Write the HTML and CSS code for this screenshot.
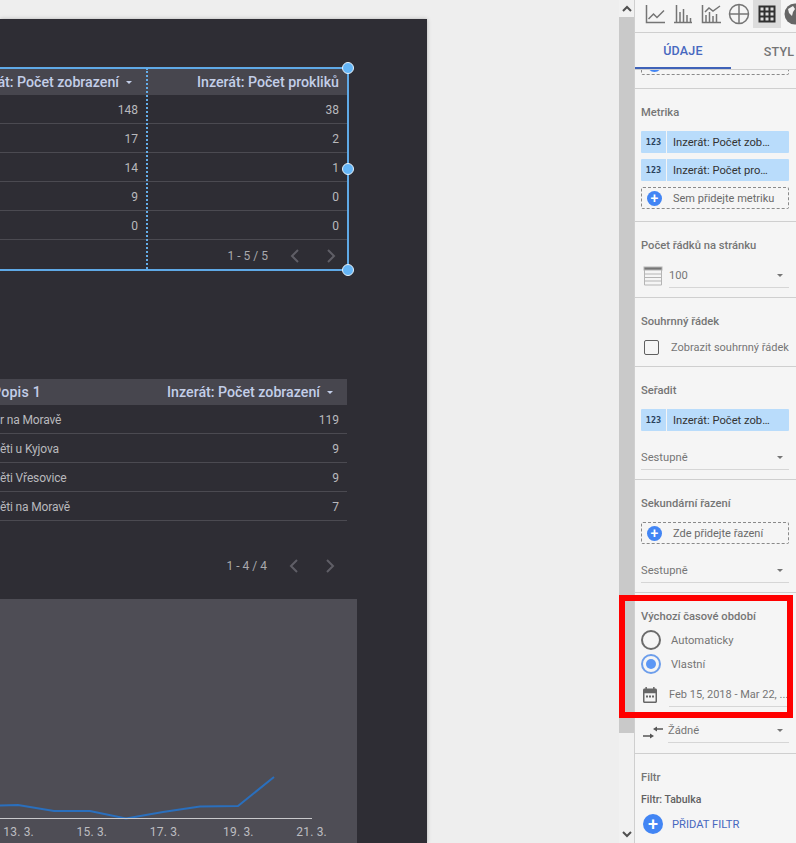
FILE: index.html
```html
<!DOCTYPE html>
<html lang="cs">
<head>
    <meta charset="UTF-8">
    <title>Report editor</title>
    <link rel="stylesheet" href="styles.css">
</head>
<body>
    <div class="workspace">
        <div class="report">
            <!-- first table, selected -->
            <div class="tbl tbl-one">
                <div class="tbl-head">
                    <div class="cell"><span class="nowrap">Inzerát: Počet zobrazení</span><span class="sort"></span></div>
                    <div class="cell"><span class="nowrap">Inzerát: Počet prokliků</span></div>
                </div>
                <div class="tbl-row"><div class="cell">148</div><div class="cell">38</div></div>
                <div class="tbl-row"><div class="cell">17</div><div class="cell">2</div></div>
                <div class="tbl-row"><div class="cell">14</div><div class="cell">1</div></div>
                <div class="tbl-row"><div class="cell">9</div><div class="cell">0</div></div>
                <div class="tbl-row"><div class="cell">0</div><div class="cell">0</div></div>
                <div class="pager">
                    <span>1 - 5 / 5</span>
                    <svg width="12" height="14" viewBox="0 0 12 14"><path d="M9 1 3 7l6 6" /></svg>
                    <svg width="12" height="14" viewBox="0 0 12 14"><path d="M3 1l6 6-6 6" /></svg>
                </div>
                <div class="selection"></div>
                <div class="col-guide"></div>
                <span class="handle handle-top"></span>
                <span class="handle handle-mid"></span>
                <span class="handle handle-bottom"></span>
            </div>

            <!-- second table -->
            <div class="tbl tbl-two">
                <div class="tbl-head">
                    <div class="cell cell-text"><span class="nowrap popis">Popis 1</span></div>
                    <div class="cell"><span class="nowrap">Inzerát: Počet zobrazení</span><span class="sort"></span></div>
                </div>
                <div class="tbl-row"><div class="cell cell-text">r na Moravě</div><div class="cell">119</div></div>
                <div class="tbl-row"><div class="cell cell-text">ěti u Kyjova</div><div class="cell">9</div></div>
                <div class="tbl-row"><div class="cell cell-text">ěti Vřesovice</div><div class="cell">9</div></div>
                <div class="tbl-row"><div class="cell cell-text">ěti na Moravě</div><div class="cell">7</div></div>
                <div class="pager pager-two">
                    <span>1 - 4 / 4</span>
                    <svg width="12" height="14" viewBox="0 0 12 14"><path d="M9 1 3 7l6 6" /></svg>
                    <svg width="12" height="14" viewBox="0 0 12 14"><path d="M3 1l6 6-6 6" /></svg>
                </div>
            </div>

            <!-- time series -->
            <div class="chart">
                <svg class="chart-line" width="357" height="244" viewBox="0 599 357 244">
                    <polyline points="0,805.5 18,805 54,811 90,811 126,818.5 163,812 200,806.5 238,806 274,777" />
                    <line x1="0" y1="818.5" x2="312" y2="818.5" />
                </svg>
                <div class="chart-axis">
                    <span>13. 3.</span><span>15. 3.</span><span>17. 3.</span><span>19. 3.</span><span>21. 3.</span>
                </div>
            </div>
        </div>
    </div>

    <div class="scrollbar">
        <div class="scroll-arrow">
            <svg width="10" height="7" viewBox="0 0 10 7"><path d="M1 6l4-4 4 4" /></svg>
        </div>
        <div class="scroll-thumb"></div>
        <div class="scroll-arrow scroll-arrow-bottom">
            <svg width="10" height="7" viewBox="0 0 10 7"><path d="M1 1l4 4 4-4" /></svg>
        </div>
    </div>

    <div class="panel">
        <div class="toolbar">
            <div class="tool">
                <svg width="28" height="28" viewBox="0 0 28 28"><path d="M5.5 5v17.5H24" /><path d="M7.5 19l5-5 3.5 3.5 7-7" /></svg>
            </div>
            <div class="tool">
                <svg width="28" height="28" viewBox="0 0 28 28"><path d="M5 22.5h18" /><path d="M7.5 5v17M11 12v10M14.500 9v13M18 15v7M21.500 18v4" /></svg>
            </div>
            <div class="tool">
                <svg width="28" height="28" viewBox="0 0 28 28"><path d="M5.500 5v17.500H24" /><path d="M9 15v7M12.500 12v10M16 16v6M19.500 14v8" /><path d="M8 12l4-4 4 3 7-5" /></svg>
            </div>
            <div class="tool">
                <svg width="28" height="28" viewBox="0 0 28 28"><circle cx="14" cy="14" r="9.500" /><path d="M14 4.500v19M4.500 14H23.500" /></svg>
            </div>
            <div class="tool tool-active">
                <svg width="28" height="28" viewBox="0 0 28 28"><path d="M6.500 6.500h15v15h-15zM11.500 6.500v15M16.500 6.500v15M6.500 11.500h15M6.500 16.500h15" /></svg>
            </div>
            <div class="tool">
                <svg width="28" height="28" viewBox="0 0 28 28"><circle class="globe" cx="14" cy="14" r="10.500" /><path class="globe-land" d="M7 9l5-3 2 3-2 3-1 4-3-3zM15 15l5 1-2 6-3-3z" /></svg>
            </div>
        </div>
        <div class="tabs">
            <div class="tab tab-active">ÚDAJE</div>
            <div class="tab">STYL</div>
        </div>

        <div class="section section-clipped">
            <div class="dropzone">
                <span class="add-btn add-small">+</span>
                <span>Sem přidejte dimenzi</span>
            </div>
        </div>

        <div class="section">
            <div class="label">Metrika</div>
            <div class="chip"><span class="chip-type">123</span><span class="chip-name">Inzerát: Počet zob…</span></div>
            <div class="chip"><span class="chip-type">123</span><span class="chip-name">Inzerát: Počet pro…</span></div>
            <div class="dropzone">
                <span class="add-btn add-small">+</span>
                <span>Sem přidejte metriku</span>
            </div>
        </div>

        <div class="section section-tight">
            <div class="label">Počet řádků na stránku</div>
            <div class="field field-icon">
                <svg width="20" height="20" viewBox="0 0 20 20" class="rows-icon">
                    <rect x="1" y="1" width="18" height="3" fill="#757575" />
                    <path d="M1.500 4v15h17V4M1.500 8h17M1.500 11.500h17M1.500 15h17" />
                </svg>
                <div class="select"><span>100</span><span class="caret"></span></div>
            </div>
        </div>

        <div class="section section-check">
            <div class="label">Souhrnný řádek</div>
            <div class="check-row">
                <span class="checkbox"></span>
                <span class="nowrap">Zobrazit souhrnný řádek</span>
            </div>
        </div>

        <div class="section section-tight">
            <div class="label">Seřadit</div>
            <div class="chip"><span class="chip-type">123</span><span class="chip-name">Inzerát: Počet zob…</span></div>
            <div class="select select-full"><span>Sestupně</span><span class="caret"></span></div>
        </div>

        <div class="section section-tight">
            <div class="label">Sekundární řazení</div>
            <div class="dropzone dropzone-solo">
                <span class="add-btn add-small">+</span>
                <span>Zde přidejte řazení</span>
            </div>
            <div class="select select-full"><span>Sestupně</span><span class="caret"></span></div>
        </div>

        <div class="section section-period">
            <div class="label label-radios">Výchozí časové období</div>
            <div class="radio-row"><span class="radio"></span>Automaticky</div>
            <div class="radio-row"><span class="radio radio-on"></span>Vlastní</div>
            <div class="field field-icon field-date">
                <svg width="16" height="18" viewBox="0 0 16 18" class="date-icon">
                    <path d="M13.500 2.500h-.9V1h-1.500v1.500H4.900V1H3.400v1.500h-.9C1.700 2.500 1 3.200 1 4v11.500c0 .8.700 1.500 1.500 1.500h11c.8 0 1.500-.7 1.500-1.500V4c0-.8-.7-1.500-1.500-1.500zm0 13h-11V7.200h11z" />
                    <path d="M4 9.500h2v2H4zM7 9.500h2v2H7zM10 9.500h2v2h-2z" />
                </svg>
                <div class="select"><span class="nowrap">Feb 15, 2018 - Mar 22, ...</span></div>
            </div>
            <div class="field field-icon field-compare">
                <svg width="22" height="16" viewBox="0 0 22 16" class="swap-icon">
                    <path d="M22 3.200h-6V1.500L12 4l4 2.500V4.800h6zM2 10.200h7V8.500l4 2.500-4 2.500v-1.700H2z" />
                </svg>
                <div class="select"><span>Žádné</span><span class="caret"></span></div>
            </div>
        </div>

        <div class="section section-last">
            <div class="label">Filtr</div>
            <div class="filter-name">Filtr: Tabulka</div>
            <div class="add-filter">
                <span class="add-btn">+</span>
                <span>PŘIDAT FILTR</span>
            </div>
        </div>
    </div>

    <div class="highlight"></div>
</body>
</html>
```

FILE: styles.css
```css
html, body {
    margin: 0;
    height: 843px;
    overflow: hidden;
}
body {
    display: flex;
    position: relative;
    font-family: Roboto, "Liberation Sans", sans-serif;
    background-color: #eeeeee;
}
.nowrap {
    white-space: nowrap;
    flex-shrink: 0;
}

/* report canvas */
.workspace {
    width: 619px;
    height: 843px;
    flex-shrink: 0;
    padding-top: 19px;
    box-sizing: border-box;
}
.report {
    position: relative;
    width: 427px;
    height: 824px;
    background: #2e2d34;
    box-shadow: 0 0 4px rgba(0,0,0,0.25);
}
.tbl {
    position: absolute;
    left: 0;
    color: #b9b9bd;
    font-size: 12px;
}
.tbl-one {
    top: 50px;
    width: 348px;
}
.tbl-two {
    top: 360px;
    width: 347px;
}
.tbl-head, .tbl-row {
    display: grid;
    grid-template-columns: 147px 1fr;
}
.tbl-two .tbl-head, .tbl-two .tbl-row {
    grid-template-columns: 100px 1fr;
}
.tbl-head {
    height: 26px;
    background: #47464e;
    color: #c3cee8;
    font-size: 14.2px;
    font-weight: 500;
}
.tbl-row {
    height: 29px;
    box-sizing: border-box;
    padding-top: 1px;
    border-bottom: 1px solid #4b4a51;
}
.cell {
    display: flex;
    align-items: center;
    justify-content: flex-end;
    padding-right: 9px;
    min-width: 0;
    white-space: nowrap;
}
.cell-text {
    justify-content: flex-start;
    padding-right: 0;
    letter-spacing: -0.15px;
}
.tbl-two .tbl-row .cell:last-child {
    padding-right: 8px;
}
.popis {
    margin-left: -8px;
    letter-spacing: 0.2px;
}
.sort {
    width: 0;
    height: 0;
    margin-left: 7px;
    margin-right: 6px;
    flex-shrink: 0;
    border-left: 3px solid transparent;
    border-right: 3px solid transparent;
    border-top: 3px solid #c3cee8;
}
.tbl-two .sort {
    margin-left: 7px;
    margin-right: 5px;
}
.pager {
    display: flex;
    align-items: center;
    justify-content: flex-end;
    height: 32px;
    padding-right: 11px;
    color: #a9a9ad;
}
.pager svg {
    margin-left: 24px;
    fill: none;
    stroke: #5f5e66;
    stroke-width: 2;
}
.pager span + svg {
    margin-left: 21px;
}
.pager-two {
    margin-top: 29px;
}
.selection {
    position: absolute;
    left: -10px;
    top: -2px;
    right: -1px;
    height: 200px;
    border: 2px solid #5fa9e6;
    pointer-events: none;
}
.col-guide {
    position: absolute;
    left: 146px;
    top: -1px;
    height: 201px;
    border-left: 2px dotted #64aeea;
}
.handle {
    position: absolute;
    left: 342px;
    width: 10px;
    height: 10px;
    background: #64b5f6;
    border: 1px solid #e6f2fb;
    border-radius: 50%;
}
.handle-top { top: -7px; }
.handle-mid { top: 94px; }
.handle-bottom { top: 195px; }

/* chart */
.chart {
    position: absolute;
    left: 0;
    top: 580px;
    width: 357px;
    height: 244px;
    background: #4e4d55;
}
.chart-line {
    position: absolute;
    left: 0;
    top: 0;
}
.chart-line polyline {
    fill: none;
    stroke: #2a6fbd;
    stroke-width: 2;
}
.chart-line line {
    stroke: #c9c9cc;
    stroke-width: 1;
}
.chart-axis {
    position: absolute;
    left: -18px;
    bottom: 4px;
    display: grid;
    grid-template-columns: repeat(5, 73.25px);
    color: #bdbdc1;
    font-size: 12px;
    letter-spacing: 0.2px;
    text-align: center;
}

/* scrollbar */
.scrollbar {
    width: 15px;
    height: 843px;
    flex-shrink: 0;
    display: flex;
    flex-direction: column;
    background: #f1f1f1;
}
.scroll-arrow {
    height: 17px;
    flex-shrink: 0;
    display: flex;
    align-items: center;
    justify-content: center;
}
.scroll-arrow svg {
    fill: none;
    stroke: #505050;
    stroke-width: 2;
}
.scroll-thumb {
    height: 716px;
    flex-shrink: 0;
    background: #c9c9c9;
}
.scroll-arrow-bottom {
    margin-top: auto;
    padding-top: 2px;
}

/* side panel */
.panel {
    width: 161px;
    flex-shrink: 0;
    border-left: 1px solid #cfcfcf;
    background: #f5f5f5;
    overflow: hidden;
    color: #757575;
    font-size: 11.2px;
}
.toolbar {
    display: flex;
    height: 32px;
    padding-left: 6px;
    border-bottom: 1px solid #cfcfcf;
    width: 200px;
}
.tool {
    width: 28px;
    height: 28px;
    flex-shrink: 0;
}
.tool svg {
    display: block;
    fill: none;
    stroke: #757575;
    stroke-width: 1.5;
}
.tool-active {
    background: #dcdcdc;
}
.tool-active svg {
    stroke: #303030;
    stroke-width: 2;
}
.tool svg .globe {
    fill: #666666;
    stroke: none;
}
.tool svg .globe-land {
    fill: #f0f0f0;
    stroke: none;
}
.tabs {
    display: flex;
    height: 36px;
    width: 192px;
    font-size: 12.5px;
    font-weight: 500;
    box-shadow: 0 1px 0 #cfcfcf;
    position: relative;
    z-index: 1;
    background: #f5f5f5;
}
.tab {
    width: 96px;
    flex-shrink: 0;
    display: flex;
    align-items: center;
    justify-content: center;
    box-sizing: border-box;
    height: 36px;
    padding-top: 1px;
    letter-spacing: 0.2px;
}
.tab-active {
    color: #4768bf;
    border-bottom: 2px solid #3f62b8;
}
.section {
    padding: 16px 7px 12px 6px;
    border-bottom: 1px solid #cfcfcf;
}
.section-clipped {
    height: 19px;
    padding: 0 7px 0 6px;
    display: flex;
    flex-direction: column;
    justify-content: flex-end;
    overflow: hidden;
}
.section-clipped .dropzone {
    margin-bottom: 13px;
    flex-shrink: 0;
}
.section-tight {
    padding-bottom: 9px;
}
.section-check {
    padding-bottom: 7px;
}
.section-period {
    padding-bottom: 10px;
}
.section-last {
    border-bottom: none;
    padding-bottom: 0;
}
.label {
    height: 13px;
    padding-top: 1px;
    line-height: 14px;
    margin-bottom: 12px;
    font-size: 11.2px;
    font-weight: 500;
    color: #757575;
    white-space: nowrap;
}
.label-radios {
    margin-bottom: 5px;
}
.chip {
    display: flex;
    height: 22px;
    margin-bottom: 6px;
    background: #b9dcfb;
    border-radius: 1px;
    color: #333333;
    line-height: 23px;
}
.section-tight .chip {
    margin-bottom: 0;
}
.chip-type {
    width: 25px;
    text-align: center;
    flex-shrink: 0;
    font-family: "DejaVu Sans Mono", monospace;
    font-size: 8.5px;
    font-weight: bold;
    border-right: 1px solid #f5f5f5;
    color: #29425c;
}
.chip-name {
    padding-left: 6px;
    white-space: nowrap;
}
.dropzone {
    display: flex;
    align-items: center;
    height: 22px;
    box-sizing: border-box;
    border: 1px dashed #8a8a8a;
    border-radius: 2px;
    white-space: nowrap;
    font-size: 11px;
}
.add-btn {
    display: inline-flex;
    align-items: center;
    justify-content: center;
    width: 20px;
    height: 20px;
    border-radius: 50%;
    background: #4285f4;
    color: #ffffff;
    font-size: 18px;
    font-weight: 500;
    line-height: 1;
    flex-shrink: 0;
}
.add-small {
    width: 15px;
    height: 15px;
    font-size: 14px;
    margin-left: 5px;
    margin-right: 11px;
}
.field {
    display: flex;
    align-items: flex-end;
    height: 25px;
    margin-top: -1px;
}
.rows-icon {
    display: block;
    margin: 0 6px 2px 2px;
    flex-shrink: 0;
    fill: none;
    stroke: #b5b5b5;
    stroke-width: 1;
}
.select {
    flex: 1;
    min-width: 0;
    display: flex;
    align-items: center;
    justify-content: space-between;
    height: 25px;
    box-sizing: border-box;
    padding-right: 6px;
    border-bottom: 1px solid #d6d6d6;
    overflow: hidden;
}
.select-full {
    margin-top: 14px;
}
.caret {
    width: 0;
    height: 0;
    flex-shrink: 0;
    border-left: 3.5px solid transparent;
    border-right: 3.5px solid transparent;
    border-top: 3.5px solid #757575;
}
.dropzone-solo {
    color: #5f5f5f;
}
.section .dropzone {
    color: #6a6a6a;
}
.check-row {
    display: flex;
    align-items: center;
    height: 24px;
    margin-top: -5px;
    white-space: nowrap;
    font-size: 11px;
}
.checkbox {
    width: 13px;
    height: 13px;
    margin: 0 12px 0 3px;
    flex-shrink: 0;
    border: 1px solid #5f5f5f;
    border-radius: 2px;
}
.radio-row {
    display: flex;
    align-items: center;
    height: 24px;
}
.radio {
    width: 16px;
    height: 16px;
    margin-right: 10px;
    flex-shrink: 0;
    border: 2px solid #6b6b6b;
    border-radius: 50%;
    display: flex;
    align-items: center;
    justify-content: center;
}
.radio-on {
    border-color: #6d9eeb;
}
.radio-on::after {
    content: "";
    width: 10px;
    height: 10px;
    background: #5c97f5;
    border-radius: 50%;
}
.field-date {
    margin-top: 7px;
    height: 24px;
    font-size: 11px;
}
.field-date .select {
    height: 25px;
    padding-right: 0;
}
.field-compare {
    margin-top: 11px;
    height: 25px;
}
.date-icon {
    display: block;
    flex-shrink: 0;
    margin: 0 11px 3px 1px;
    fill: #666666;
}
.swap-icon {
    display: block;
    flex-shrink: 0;
    margin: 0 5px 2px 0;
    fill: #555555;
}
.filter-name {
    margin-top: -4px;
    height: 16px;
    line-height: 16px;
    font-size: 10.5px;
    font-weight: 500;
    color: #616161;
}
.add-filter {
    display: flex;
    align-items: center;
    gap: 9px;
    margin-top: 6px;
    padding-left: 2px;
    color: #4768bf;
    white-space: nowrap;
    font-size: 11.2px;
}

/* red box drawn over the screenshot */
.highlight {
    position: absolute;
    left: 619px;
    top: 595px;
    width: 174px;
    height: 123px;
    box-sizing: border-box;
    border: 6px solid #ff0000;
    pointer-events: none;
}
```
